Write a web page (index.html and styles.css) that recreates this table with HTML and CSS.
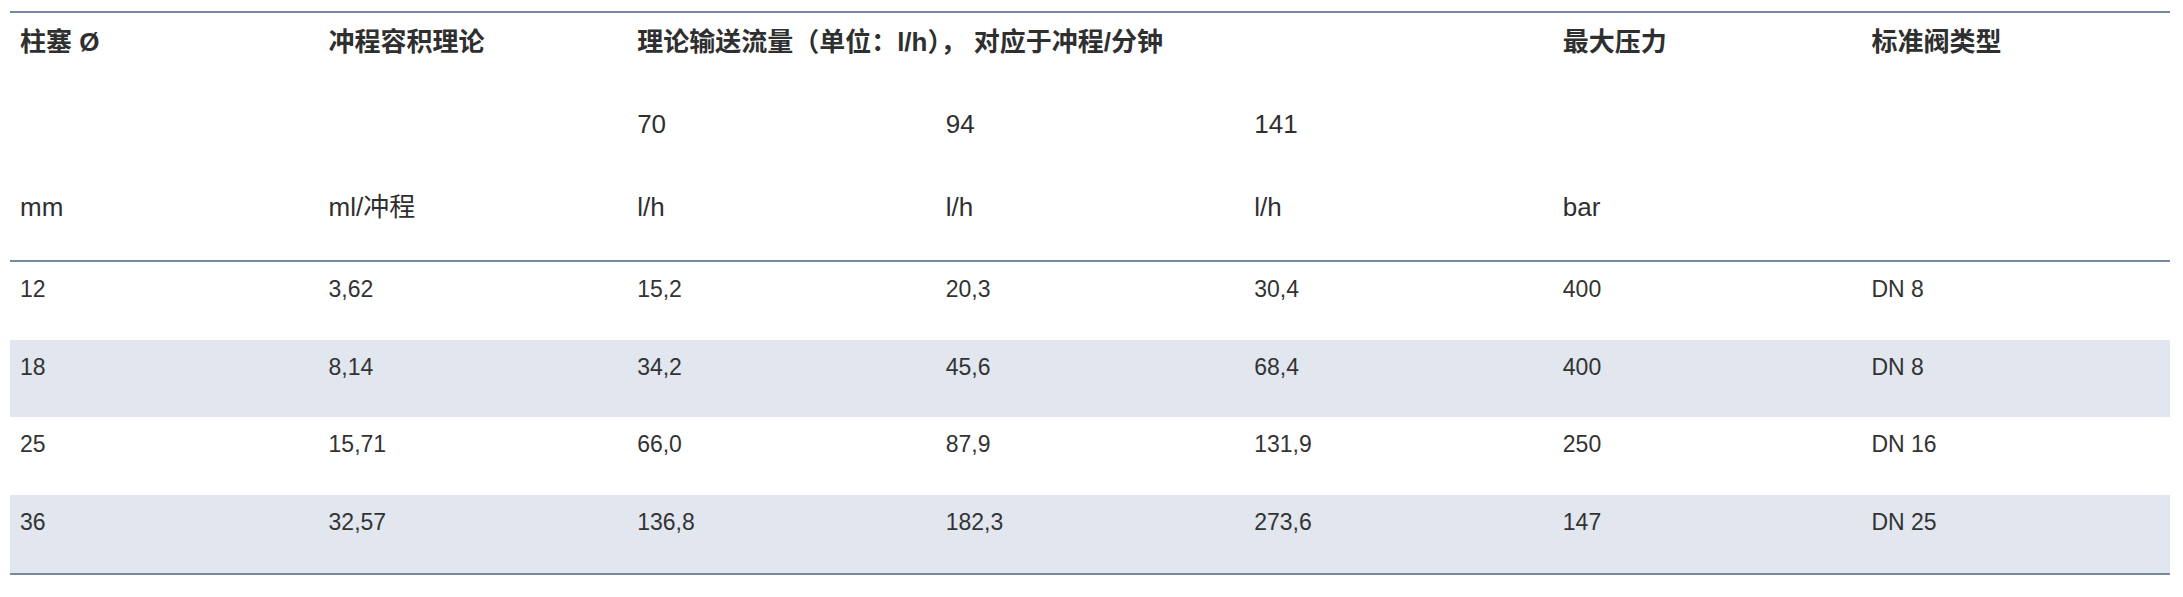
FILE: index.html
```html
<!DOCTYPE html>
<html lang="zh-CN">
<head>
<meta charset="utf-8">
<title>柱塞参数表</title>
<link rel="stylesheet" href="styles.css">
</head>
<body>
<table class="spec">
  <thead>
    <tr class="head-row">
      <th class="strong">柱塞 Ø</th>
      <th class="strong">冲程容积理论</th>
      <th class="strong" colspan="3">理论输送流量（单位：l/h）， 对应于冲程/分钟</th>
      <th class="strong">最大压力</th>
      <th class="strong">标准阀类型</th>
    </tr>
    <tr class="head-row">
      <th></th>
      <th></th>
      <th>70</th>
      <th>94</th>
      <th>141</th>
      <th></th>
      <th></th>
    </tr>
    <tr class="head-row last">
      <th>mm</th>
      <th>ml/冲程</th>
      <th>l/h</th>
      <th>l/h</th>
      <th>l/h</th>
      <th>bar</th>
      <th></th>
    </tr>
  </thead>
  <tbody>
    <tr><td>12</td><td>3,62</td><td>15,2</td><td>20,3</td><td>30,4</td><td>400</td><td>DN 8</td></tr>
    <tr class="alt"><td>18</td><td>8,14</td><td>34,2</td><td>45,6</td><td>68,4</td><td>400</td><td>DN 8</td></tr>
    <tr><td>25</td><td>15,71</td><td>66,0</td><td>87,9</td><td>131,9</td><td>250</td><td>DN 16</td></tr>
    <tr class="alt"><td>36</td><td>32,57</td><td>136,8</td><td>182,3</td><td>273,6</td><td>147</td><td>DN 25</td></tr>
  </tbody>
</table>
</body>
</html>
```

FILE: styles.css
```css
html, body {
  margin: 0;
  padding: 0;
  background: #ffffff;
}

body {
  padding: 11px 13px 0 10px;
  font-family: "Liberation Sans", Arial, "Noto Sans CJK SC", sans-serif;
  color: #333333;
}

.spec {
  width: 2160px;
  table-layout: fixed;
  border-collapse: separate;
  border-spacing: 0;
  border-top: 2px solid #7788a3;
  border-bottom: 2px solid #7788a3;
}

.spec th,
.spec td {
  text-align: left;
  vertical-align: top;
  padding-left: 10px;
  padding-right: 10px;
}

.spec th {
  font-size: 26px;
  line-height: 30px;
  font-weight: 400;
  padding-top: 14px;
  padding-bottom: 38.3px;
  color: #2f2f2f;
}

.spec th.strong {
  font-weight: 700;
}

.head-row.last th {
  border-bottom: 2px solid #7788a3;
}

.spec td {
  font-size: 23px;
  line-height: 26px;
  padding-top: 14px;
  padding-bottom: 37.7px;
  color: #333333;
}

.spec tr.alt td {
  background: #e1e6ef;
}
```
